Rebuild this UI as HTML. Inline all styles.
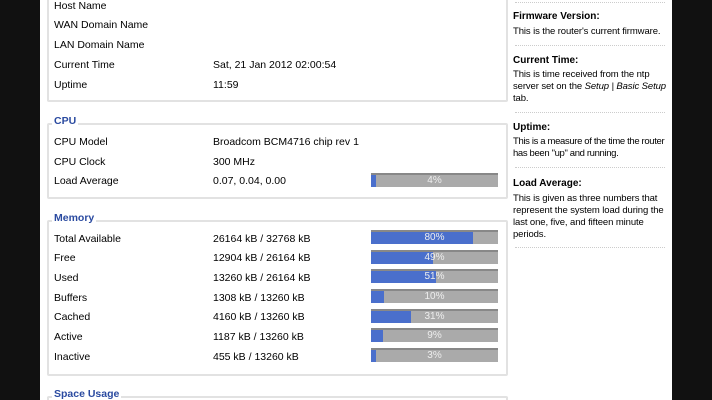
<!DOCTYPE html>
<html><head><meta charset="utf-8"><style>
html,body{margin:0;width:712px;height:400px;overflow:hidden}
body{background:#111;position:relative;font-family:"Liberation Sans",sans-serif;font-size:10.5px;color:#000}
.page{position:absolute;left:40px;top:0;width:632px;height:400px;background:#fff}
.box{position:absolute;left:47px;width:457px;border:2px solid #e2e2e2;border-radius:2px}
.lg{position:absolute;left:52px;background:#fff;padding:0 2px;color:#2a4aa0;font-weight:bold;font-size:10.5px}
.t{position:absolute;white-space:nowrap}
.bar{position:absolute;left:371px;width:127px;height:12px;background:#aaa;border-top:2px solid #888;box-sizing:content-box}
.bar i{position:absolute;left:0;top:0;height:12px;background:#4a6fcc}
.bar b{position:absolute;left:0;right:0;top:0;text-align:center;color:#eee;font-weight:normal;font-size:10px;line-height:12px}
.sep{position:absolute;left:515px;width:150px;border-top:1px dotted #ccc}
.h{position:absolute;left:513px;font-weight:bold;white-space:nowrap;font-size:10px}
.p{position:absolute;left:513px;width:158px;white-space:nowrap;line-height:12px;font-size:9.5px;letter-spacing:-0.1px}
</style></head><body>
<div class="page"></div>
<div class="box" style="top:-4px;height:104px;border-top:none"></div>
<div class="t" style="left:54px;top:0px">Host Name</div>
<div class="t" style="left:54px;top:19px">WAN Domain Name</div>
<div class="t" style="left:54px;top:39px">LAN Domain Name</div>
<div class="t" style="left:54px;top:59px">Current Time</div>
<div class="t" style="left:213px;top:59px">Sat, 21 Jan 2012 02:00:54</div>
<div class="t" style="left:54px;top:79px">Uptime</div>
<div class="t" style="left:213px;top:79px">11:59</div>

<div class="box" style="top:123px;height:72px"></div>
<div class="lg" style="top:115px">CPU</div>
<div class="t" style="left:54px;top:136px">CPU Model</div>
<div class="t" style="left:213px;top:136px">Broadcom BCM4716 chip rev 1</div>
<div class="t" style="left:54px;top:156px">CPU Clock</div>
<div class="t" style="left:213px;top:156px">300 MHz</div>
<div class="t" style="left:54px;top:175px">Load Average</div>
<div class="t" style="left:213px;top:175px">0.07, 0.04, 0.00</div>
<div class="bar" style="top:173px"><i style="width:5px"></i><b>4%</b></div>

<div class="box" style="top:220px;height:152px"></div>
<div class="lg" style="top:212px">Memory</div>
<div class="t" style="left:54px;top:233px">Total Available</div><div class="t" style="left:213px;top:233px">26164 kB / 32768 kB</div>
<div class="bar" style="top:230px"><i style="width:102px"></i><b>80%</b></div>
<div class="t" style="left:54px;top:252px">Free</div><div class="t" style="left:213px;top:252px">12904 kB / 26164 kB</div>
<div class="bar" style="top:250px"><i style="width:62px"></i><b>49%</b></div>
<div class="t" style="left:54px;top:272px">Used</div><div class="t" style="left:213px;top:272px">13260 kB / 26164 kB</div>
<div class="bar" style="top:269px"><i style="width:65px"></i><b>51%</b></div>
<div class="t" style="left:54px;top:292px">Buffers</div><div class="t" style="left:213px;top:292px">1308 kB / 13260 kB</div>
<div class="bar" style="top:289px"><i style="width:13px"></i><b>10%</b></div>
<div class="t" style="left:54px;top:311px">Cached</div><div class="t" style="left:213px;top:311px">4160 kB / 13260 kB</div>
<div class="bar" style="top:309px"><i style="width:40px"></i><b>31%</b></div>
<div class="t" style="left:54px;top:331px">Active</div><div class="t" style="left:213px;top:331px">1187 kB / 13260 kB</div>
<div class="bar" style="top:328px"><i style="width:12px"></i><b>9%</b></div>
<div class="t" style="left:54px;top:351px">Inactive</div><div class="t" style="left:213px;top:351px">455 kB / 13260 kB</div>
<div class="bar" style="top:348px"><i style="width:5px"></i><b>3%</b></div>

<div class="box" style="top:396px;height:10px;border-bottom:none"></div>
<div class="lg" style="top:388px">Space Usage</div>

<div class="sep" style="top:2px"></div>
<div class="h" style="top:11px">Firmware Version:</div>
<div class="p" style="top:26px">This is the router's current firmware.</div>
<div class="sep" style="top:45px"></div>
<div class="h" style="top:55px">Current Time:</div>
<div class="p" style="top:69px">This is time received from the ntp<br>server set on the <i>Setup | Basic Setup</i><br>tab.</div>
<div class="sep" style="top:112px"></div>
<div class="h" style="top:122px">Uptime:</div>
<div class="p" style="top:136px;letter-spacing:-0.35px">This is a measure of the time the router<br>has been "up" and running.</div>
<div class="sep" style="top:167px"></div>
<div class="h" style="top:178px">Load Average:</div>
<div class="p" style="top:193px">This is given as three numbers that<br>represent the system load during the<br>last one, five, and fifteen minute<br>periods.</div>
<div class="sep" style="top:247px"></div>
</body></html>
